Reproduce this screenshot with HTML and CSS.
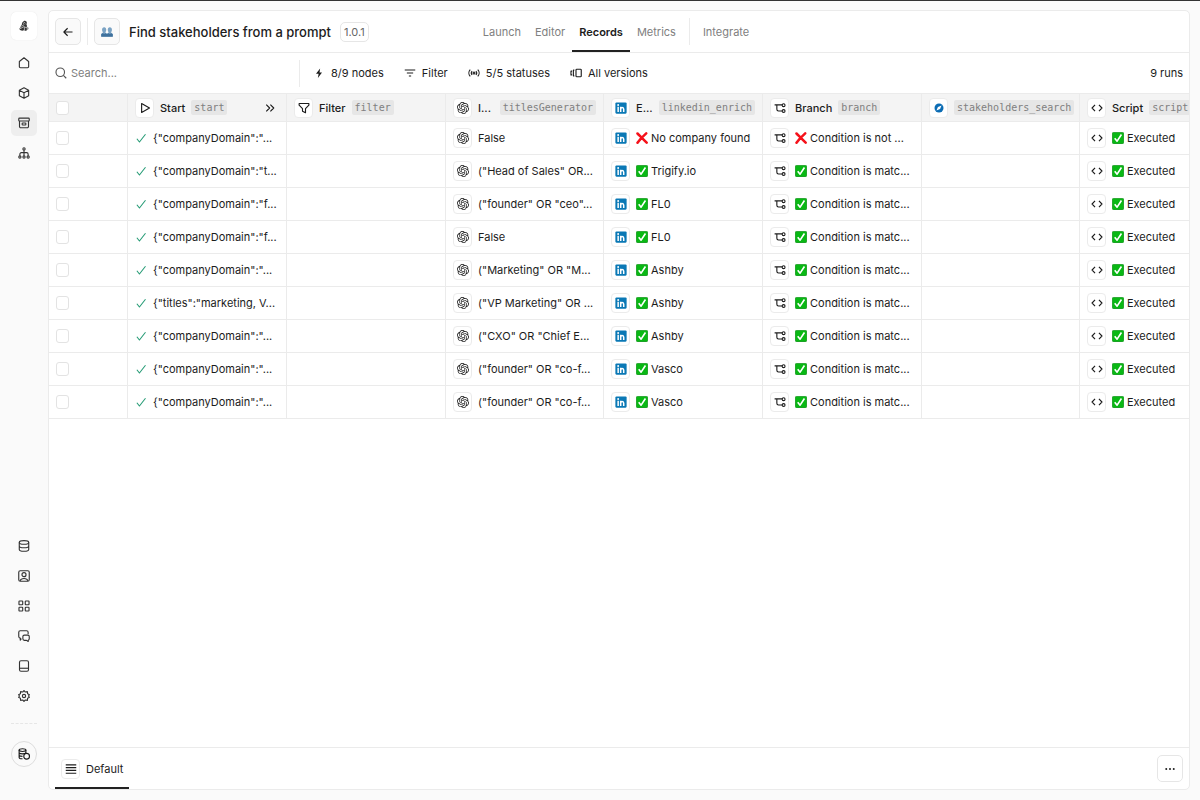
FILE: index.html
```
<!DOCTYPE html>
<html lang="en">

<head>
    <meta charset="UTF-8">
    <meta name="viewport" content="width=device-width, initial-scale=1">
    <title>Find stakeholders from a prompt</title>
    <link rel="stylesheet" href="styles.css">
</head>

<body>
    <!-- icon set -->
    <svg class="sprite" aria-hidden="true">
        <symbol id="play" viewBox="0 0 16 16"><path d="M3.500 2v12L14 8z" /></symbol>
        <symbol id="funnel" viewBox="0 0 16 16"><path d="M1.500 2h13v2.200L10 8.800v5.600l-4-2.200V8.800L1.500 4.200z" /></symbol>
        <symbol id="openai" viewBox="0 0 24 24"><path class="solid" d="M22.28 9.82a5.98 5.98 0 0 0-.52-4.91 6.05 6.05 0 0 0-6.51-2.9A6.07 6.07 0 0 0 4.98 4.18a5.98 5.98 0 0 0-4 2.9 6.05 6.05 0 0 0 .74 7.1 5.98 5.98 0 0 0 .51 4.91 6.05 6.05 0 0 0 6.51 2.9A5.98 5.98 0 0 0 13.26 24a6.06 6.06 0 0 0 5.77-4.21 5.99 5.99 0 0 0 4-2.9 6.06 6.06 0 0 0-.75-7.07zm-9.02 12.61a4.48 4.48 0 0 1-2.88-1.04l.14-.08 4.78-2.76a.79.79 0 0 0 .39-.68v-6.74l2.02 1.17a.07.07 0 0 1 .04.05v5.58a4.5 4.5 0 0 1-4.49 4.5zM3.6 18.3a4.47 4.47 0 0 1-.54-3.01l.14.09 4.78 2.76a.77.77 0 0 0 .78 0l5.84-3.37v2.33a.08.08 0 0 1-.03.06L9.74 19.95A4.5 4.5 0 0 1 3.6 18.3zM2.34 7.9a4.49 4.49 0 0 1 2.37-1.98v5.68a.77.77 0 0 0 .38.68l5.82 3.35-2.02 1.17a.08.08 0 0 1-.07 0l-4.83-2.79A4.5 4.5 0 0 1 2.34 7.9zm16.6 3.86l-5.84-3.39 2.02-1.16a.08.08 0 0 1 .07 0l4.83 2.79a4.49 4.49 0 0 1-.68 8.1v-5.68a.79.79 0 0 0-.4-.66zm2.01-3.03l-.14-.08-4.78-2.78a.78.78 0 0 0-.78 0L9.41 9.23V6.9a.07.07 0 0 1 .03-.06l4.83-2.79a4.5 4.5 0 0 1 6.68 4.68zM8.31 12.86l-2.02-1.16a.08.08 0 0 1-.04-.06V6.07a4.5 4.5 0 0 1 7.37-3.45l-.14.08L8.7 5.46a.79.79 0 0 0-.39.68zm1.1-2.36l2.6-1.5 2.6 1.5v3l-2.6 1.5-2.6-1.5z" /></symbol>
        <symbol id="linkedin" viewBox="0 0 16 16"><rect x="0.5" y="0.5" width="15" height="15" rx="1.5" fill="#0a78b5" stroke="none" /><circle cx="4.2" cy="4" r="1.3" fill="#fff" stroke="none" /><path class="mark" d="M4.2 6.4v6.8M7.6 6.4v6.8M7.6 9.6c0-1.6.9-2.2 2-2.2s2 .6 2 2.4v3.4" /></symbol>
        <symbol id="branch" viewBox="0 0 16 16"><path d="M.8 3.800h10M3.800 3.800v6a2.200 2.200 0 0 0 2.200 2.200h4.800" /><circle cx="12.8" cy="4.300" r="1.900" /><circle cx="12.800" cy="12" r="1.900" /></symbol>
        <symbol id="compass" viewBox="0 0 16 16"><circle cx="8" cy="8" r="6" fill="#0b6cb4" stroke="none" /><path d="M11.400 4.600L9.400 9.400 4.600 11.400 6.600 6.600z" fill="#fff" stroke="none" /></symbol>
        <symbol id="code" viewBox="0 0 16 16"><path d="M5.400 3.800L1.400 8l4 4.200M10.600 3.800l4 4.200-4 4.200" /></symbol>
        <symbol id="check" viewBox="0 0 16 16"><path d="M2.500 9l3.400 4.300L14 3" /></symbol>
        <symbol id="yes" viewBox="0 0 16 16"><rect x="0.5" y="0.5" width="15" height="15" rx="1.5" fill="#09b814" stroke="#078f10" stroke-width="1" /><path d="M3.600 8.200l3.200 4L12.600 3.400" fill="none" stroke="#fff" stroke-width="2.200" /></symbol>
        <symbol id="no" viewBox="0 0 16 16"><path d="M2 2c3 3 8 8.200 12.200 12.200M13.600 1.800C9.500 5.500 5 10 2 14.200" fill="none" stroke="#f5121b" stroke-width="3.400" stroke-linecap="round" /></symbol>
    </svg>

    <div class="app">
        <nav class="sidebar" aria-label="Main">
            <a class="logo" href="#" aria-label="Workspace">
                <svg viewBox="0 0 16 16"><path class="solid" d="M7.500 1.500c2-1.200 4.200-.2 4.300 2.300v9.700c-1 1.300-3 1.200-4 .3-1.500 1-4.800.6-5.600-1-.7-1.500.2-2.600 1.500-3.200-.4-1.400.2-2.400 1.400-3C4.900 4.400 5.800 2.600 7.500 1.500zM12.600 9c1.700 1 1.700 3.500 0 4.300z" /><path class="cut" d="M2.500 11.800l5.500-3M4.500 8.500l4-2.500M8.500 8.500v6M6.500 4.800l3-1.800M10 5l2.500 1M9 9.500l3.500 1" /></svg>
            </a>
            <a class="nav-item" href="#" aria-label="Home"><svg viewBox="0 0 16 16"><path d="M1.800 6L8 1l6.200 5v6.800a1.500 1.500 0 0 1-1.500 1.500H3.300a1.500 1.500 0 0 1-1.500-1.500z" /></svg></a>
            <a class="nav-item" href="#" aria-label="Apps"><svg viewBox="0 0 16 16"><path d="M8 1l6.200 3.300v7.400L8 15l-6.200-3.300V4.300zM2 4.500l6 3.200 6-3.200M8 7.700V15" /></svg></a>
            <a class="nav-item active" href="#" aria-label="Records"><svg viewBox="0 0 16 16"><rect x="1" y="1.500" width="14" height="3.800" rx="1" /><path d="M2 5.300v7.300a1.800 1.800 0 0 0 1.800 1.800h8.400a1.800 1.800 0 0 0 1.800-1.800V5.300" /><rect x="5.500" y="8" width="5" height="2.700" rx="1" /></svg></a>
            <a class="nav-item" href="#" aria-label="Workflows"><svg viewBox="0 0 16 16"><circle cx="8" cy="2.500" r="1.500" /><circle cx="2.500" cy="13.300" r="1.500" /><circle cx="8" cy="13.300" r="1.500" /><circle cx="13.500" cy="13.300" r="1.500" /><path d="M8 4v7.800M2.500 11.800V9.500a2 2 0 0 1 2-2h7a2 2 0 0 1 2 2v2.300" /></svg></a>

            <div class="spacer"></div>

            <a class="nav-item" href="#" aria-label="Data"><svg viewBox="0 0 16 16"><ellipse cx="8" cy="3.300" rx="6.300" ry="2.400" /><path d="M1.700 3.300v9.300C1.700 14 4.500 15 8 15s6.300-1 6.300-2.400V3.300M1.700 8c0 1.400 2.800 2.400 6.300 2.400s6.300-1 6.300-2.400" /></svg></a>
            <a class="nav-item" href="#" aria-label="Contacts"><svg viewBox="0 0 16 16"><rect x="1" y="1" width="14" height="14" rx="2" /><circle cx="8" cy="6.200" r="2.700" /><path d="M2.800 14.600c.7-2.400 2.600-3.200 5.200-3.200s4.500.8 5.200 3.200" /></svg></a>
            <a class="nav-item" href="#" aria-label="Integrations"><svg viewBox="0 0 16 16"><rect x="1.300" y="1.300" width="5" height="5" rx=".8" /><rect x="9.700" y="1.300" width="5" height="5" rx=".8" /><rect x="1.300" y="9.700" width="5" height="5" rx=".8" /><rect x="9.700" y="9.700" width="5" height="5" rx=".8" /></svg></a>
            <a class="nav-item" href="#" aria-label="Chat"><svg viewBox="0 0 16 16"><path d="M4.500 11.500L3 13.500v-2.700A2 2 0 0 1 1 8.800V3a2 2 0 0 1 2-2h8.500a2 2 0 0 1 2 2v2.500" /><path d="M8.500 6.800h4.500a2 2 0 0 1 2 2v2.900a2 2 0 0 1-1.400 1.900v1.700l-2.200-1.500H8.500a2 2 0 0 1-2-2v-3a2 2 0 0 1 2-2z" /></svg></a>
            <a class="nav-item" href="#" aria-label="Docs"><svg viewBox="0 0 16 16"><rect x="2" y="1" width="12" height="14" rx="2" /><path d="M2 11h12" /></svg></a>
            <a class="nav-item" href="#" aria-label="Settings"><svg viewBox="0 0 16 16"><path d="M8 .7l1.800 2 2.700-.5.300 2.800 2.400 1.300L14 8l1.200 1.700-2.400 1.300-.3 2.800-2.700-.5-1.800 2-1.800-2-2.700.5L3.200 11 .8 9.700 2 8 .8 6.300 3.200 5l.3-2.800 2.700.5z" /><circle cx="8" cy="8" r="2.200" /></svg></a>
            <hr>
            <a class="credits" href="#" aria-label="Credits"><svg viewBox="0 0 16 16"><ellipse cx="6" cy="2.800" rx="4.500" ry="1.800" /><path d="M1.500 2.800v9.700c0 1 2 1.900 4.500 1.900M10.500 2.800v4M1.500 6c0 1 2 1.800 4.500 1.800s4.500-.8 4.500-1.800M1.500 9.300c0 1 2 1.800 4.500 1.800" /><circle cx="11.500" cy="11" r="3.800" /></svg></a>
        </nav>

        <main class="panel">
            <header class="topbar">
                <div class="title">
                    <button class="square" aria-label="Back"><svg viewBox="0 0 16 16"><path d="M14 8H2.500M7.500 3L2.500 8l5 5" /></svg></button>
                    <span class="divider"></span>
                    <span class="square emoji">
                        <svg viewBox="0 0 16 16"><path fill="#7ba3c4" d="M4.200 1.500c1.800 0 2.800 1.300 2.800 3.400 0 1.600-.5 2.800-1.200 3.500 0 1.200 2 1 2.200 2.600V14H.3v-2.700c0-1.900 2.300-1.700 2.300-3.100-.7-.6-1.200-1.700-1.200-3.300 0-2.100 1-3.400 2.800-3.400zM11.800 1.500c1.800 0 2.800 1.300 2.800 3.400 0 1.600-.5 2.700-1.200 3.300 0 1.400 2.300 1.200 2.300 3.100V14H8v-3c.2-1.600 2.200-1.400 2.200-2.600C9.500 7.700 9 6.500 9 4.900c0-2.100 1-3.400 2.800-3.400z" /><path fill="#3f719d" d="M.3 14.300v-3c0-1 1-1.500 2.200-1.800l1.700 1.300L6 9.500c1.200.3 2 .8 2 1.800 0-1 .8-1.500 2-1.800l1.800 1.300 1.700-1.300c1.200.3 2.200.8 2.200 1.800v3z" /></svg>
                    </span>
                    <h1>Find stakeholders from a prompt</h1>
                    <span class="version">1.0.1</span>
                </div>
                <nav class="tabs" aria-label="Views">
                    <a href="#">Launch</a>
                    <a href="#">Editor</a>
                    <a class="active" href="#">Records</a>
                    <a href="#">Metrics</a>
                    <span class="divider"></span>
                    <a href="#">Integrate</a>
                </nav>
            </header>

            <div class="toolbar">
                <label class="search">
                    <svg viewBox="0 0 16 16"><circle cx="7" cy="7" r="5.700" /><path d="M11.200 11.200L15 15" /></svg>
                    <input type="text" placeholder="Search..." aria-label="Search">
                </label>
                <span class="divider"></span>
                <button class="tool"><svg viewBox="0 0 16 16"><path class="solid" d="M9.500 2L4 9h3.500L6.500 14.500 12 7.200H8.700z" /></svg>8/9 nodes</button>
                <button class="tool"><svg viewBox="0 0 16 16"><path d="M1 4h14M3.800 8h8.400M6.500 12h3" /></svg>Filter</button>
                <button class="tool"><svg viewBox="0 0 16 16"><circle cx="8" cy="8" r="1.300" /><path d="M5.500 5.500a3.700 3.700 0 0 0 0 5M10.500 5.500a3.700 3.700 0 0 1 0 5M3 3.500a6.500 6.500 0 0 0 0 9M13 3.500a6.500 6.500 0 0 1 0 9" /></svg>5/5 statuses</button>
                <button class="tool"><svg viewBox="0 0 16 16"><rect x="8" y="3" width="7" height="10" rx="1" /><path d="M5.800 4.200H4.500v7.600h1.300M2.800 5.500H1.300v5h1.500" /></svg>All versions</button>
                <span class="runs">9 runs</span>
            </div>

            <div class="grid">
                <table>
                    <colgroup>
                        <col class="col-select">
                        <col class="col-wide">
                        <col class="col-wide">
                        <col class="col-narrow">
                        <col class="col-wide">
                        <col class="col-wide">
                        <col class="col-narrow">
                        <col class="col-wide">
                    </colgroup>
                    <thead>
                        <tr>
                            <th><input type="checkbox" aria-label="Select all"></th>
                            <th><div class="cell"><span class="chip"><svg><use href="#play" /></svg></span><span class="name">Start</span><code>start</code><button class="expand" aria-label="Expand column"><svg viewBox="0 0 16 16"><path d="M3 3.500L7.500 8 3 12.500M8.500 3.500L13 8l-4.500 4.500" /></svg></button></div></th>
                            <th><div class="cell"><span class="chip"><svg><use href="#funnel" /></svg></span><span class="name">Filter</span><code>filter</code></div></th>
                            <th><div class="cell"><span class="chip"><svg><use href="#openai" /></svg></span><span class="name fill">I...</span><code>titlesGenerator</code></div></th>
                            <th><div class="cell"><span class="chip"><svg><use href="#linkedin" /></svg></span><span class="name fill">E...</span><code>linkedin_enrich</code></div></th>
                            <th><div class="cell"><span class="chip"><svg><use href="#branch" /></svg></span><span class="name">Branch</span><code>branch</code></div></th>
                            <th><div class="cell"><span class="chip"><svg><use href="#compass" /></svg></span><code>stakeholders_search</code></div></th>
                            <th><div class="cell"><span class="chip"><svg><use href="#code" /></svg></span><span class="name">Script</span><code>script</code></div></th>
                        </tr>
                    </thead>
                    <tbody id="rows"></tbody>
                </table>
            </div>

            <footer class="views">
                <button class="view active"><span class="chip"><svg viewBox="0 0 16 16"><path d="M1 2.500h14M1 6.200h14M1 9.900h14M1 13.600h14" /></svg></span>Default</button>
                <button class="square more" aria-label="More"><svg viewBox="0 0 16 16"><circle cx="3" cy="8" r="1.300" /><circle cx="8" cy="8" r="1.300" /><circle cx="13" cy="8" r="1.300" /></svg></button>
            </footer>
        </main>
    </div>

    <script>
        // start input, generated titles, company (null = not found)
        const runs = [
            ['{"companyDomain":"...', 'False', null],
            ['{"companyDomain":"t...', '("Head of Sales" OR...', 'Trigify.io'],
            ['{"companyDomain":"f...', '("founder" OR "ceo"...', 'FL0'],
            ['{"companyDomain":"f...', 'False', 'FL0'],
            ['{"companyDomain":"...', '("Marketing" OR "M...', 'Ashby'],
            ['{"titles":"marketing, V...', '("VP Marketing" OR ...', 'Ashby'],
            ['{"companyDomain":"...', '("CXO" OR "Chief E...', 'Ashby'],
            ['{"companyDomain":"...', '("founder" OR "co-f...', 'Vasco'],
            ['{"companyDomain":"...', '("founder" OR "co-f...', 'Vasco']
        ];

        const icon = (id, cls) => `<svg class="${cls}"><use href="#${id}" /></svg>`;
        const chip = id => `<span class="chip">${icon(id, '')}</span>`;
        const cell = html => `<td><div class="cell">${html}</div></td>`;
        const result = (ok, text) => `<span class="value">${icon(ok ? 'yes' : 'no', 'mood')}${text}</span>`;

        document.getElementById('rows').innerHTML = runs.map(([input, titles, company], i) => `
            <tr>
                <td><input type="checkbox" aria-label="Select run ${i + 1}"></td>
                ${cell(icon('check', 'ok') + `<span class="value">${input}</span>`)}
                <td></td>
                ${cell(chip('openai') + `<span class="value">${titles}</span>`)}
                ${cell(chip('linkedin') + result(company, company || 'No company found'))}
                ${cell(chip('branch') + result(company, company ? 'Condition is matc...' : 'Condition is not ...'))}
                <td></td>
                ${cell(chip('code') + result(true, 'Executed'))}
            </tr>`).join('');
    </script>
</body>

</html>
```
FILE: styles.css
```
* {
    box-sizing: border-box;
}

body {
    margin: 0;
    background-color: #fafafa;
    color: #1c1c1c;
    font-family: Inter, "Liberation Sans", sans-serif;
    font-size: 11px;
    line-height: 16px;
}

a {
    color: inherit;
    text-decoration: none;
}

button,
input {
    margin: 0;
    font: inherit;
    color: inherit;
}

button {
    padding: 0;
    border: 0;
    background: none;
}

svg {
    display: block;
    flex: none;
    width: 12px;
    height: 12px;
    fill: none;
    stroke: currentColor;
    stroke-width: 1.5;
    stroke-linejoin: round;
}

.sprite {
    position: absolute;
    width: 0;
    height: 0;
}

.solid {
    fill: currentColor;
    stroke: none;
}

.mark {
    stroke: #fff;
    stroke-width: 2;
}

.cut {
    stroke: #fff;
    stroke-width: 0.8;
}

.app {
    display: flex;
    height: 100vh;
    padding: 9px 10px 10px 0;
    border-top: 1px solid #333;
}

/* sidebar */
.sidebar {
    display: flex;
    flex: none;
    flex-direction: column;
    align-items: center;
    gap: 4px;
    width: 48px;
    padding: 2px 0 23px;
}

.logo,
.nav-item {
    display: flex;
    align-items: center;
    justify-content: center;
    width: 26px;
    height: 26px;
    border-radius: 5px;
    color: #333;
}

.logo {
    height: 28px;
    margin-bottom: 6px;
    background-color: #fff;
    box-shadow: 0 0 1px #ddd;
}

.nav-item.active {
    background-color: #eee;
}

.spacer {
    flex: 1;
}

.sidebar hr {
    width: 26px;
    margin: 10px 0 13px;
    border: 0;
    border-top: 1px dashed #e6e6e6;
}

.credits {
    display: flex;
    align-items: center;
    justify-content: center;
    width: 26px;
    height: 26px;
    border: 1px solid #ddd;
    border-radius: 50%;
}

/* main panel */
.panel {
    display: flex;
    flex: 1;
    flex-direction: column;
    min-width: 0;
    border: 1px solid #ebebeb;
    border-radius: 5px;
    background-color: #fff;
    overflow: hidden;
}

.divider {
    width: 1px;
    height: 27px;
    background-color: #ebebeb;
}

.topbar {
    display: grid;
    grid-template-columns: 1fr auto 1fr;
    flex: none;
    height: 42px;
    padding: 0 12px 0 6px;
    border-bottom: 1px solid #ebebeb;
}

.title {
    display: flex;
    align-items: center;
    gap: 6px;
    white-space: nowrap;
}

.square {
    display: flex;
    flex: none;
    align-items: center;
    justify-content: center;
    width: 26px;
    height: 27px;
    border: 1px solid #e6e6e6;
    border-radius: 5px;
}

.topbar .square {
    background-color: #fafafa;
}

.emoji svg {
    stroke: none;
}

h1 {
    margin: 0 3px;
    font-size: 13px;
    font-weight: 500;
    line-height: 20px;
}

.version {
    padding: 1px 3px;
    border: 1px solid #e6e6e6;
    border-radius: 5px;
    color: #666;
}

.tabs {
    display: flex;
    align-items: center;
    color: #808080;
}

.tabs a {
    padding: 11px 7px 10px;
    border-top: 2px solid transparent;
    border-bottom: 2px solid transparent;
}

.tabs a.active {
    border-bottom-color: #222;
    color: #1c1c1c;
    font-weight: 600;
}

.tabs .divider {
    margin: 0 6px;
}

.toolbar {
    display: flex;
    flex: none;
    align-items: center;
    height: 41px;
    padding: 0 6px;
    border-bottom: 1px solid #ebebeb;
}

.search {
    display: flex;
    align-items: center;
    gap: 4px;
    width: 244px;
    color: #555;
}

.search input {
    flex: 1;
    min-width: 0;
    padding: 0;
    border: 0;
    outline: 0;
}

.search input::placeholder {
    color: #808080;
}

.tool {
    display: flex;
    align-items: center;
    gap: 6px;
    margin-right: 20px;
}

.toolbar .divider {
    margin-right: 13px;
}

.runs {
    margin-left: auto;
}

/* records */
.grid {
    flex: 1;
    min-height: 0;
    overflow: hidden;
}

table {
    width: 1190px;
    border-collapse: separate;
    border-spacing: 0;
    table-layout: fixed;
}

.col-select {
    width: 79px;
}

.col-wide {
    width: 159px;
}

.col-narrow {
    width: 158px;
}

th,
td {
    height: 33px;
    padding: 0 7px;
    border-right: 1px solid #ebebeb;
    border-bottom: 1px solid #ebebeb;
    font-weight: 400;
    text-align: left;
    white-space: nowrap;
    overflow: hidden;
}

th {
    height: 28px;
    background-color: #f4f4f4;
}

.cell {
    display: flex;
    align-items: center;
    gap: 6px;
}

.chip {
    display: flex;
    flex: none;
    align-items: center;
    justify-content: center;
    width: 19px;
    height: 20px;
    border: 1px solid #ebebeb;
    border-radius: 4px;
    background-color: #fff;
}

.name {
    font-weight: 500;
}

.name.fill {
    flex: 1;
}

code {
    padding: 0 3px;
    border-radius: 2px;
    background-color: #e6e6e6;
    color: #808080;
    font-family: "DejaVu Sans Mono", monospace;
    font-size: 10px;
    line-height: 15px;
}

.expand {
    margin: 0 3px 0 auto;
}

.value {
    display: flex;
    align-items: center;
    gap: 3px;
}

.ok {
    color: #2a9d78;
}

input[type="checkbox"] {
    display: block;
    width: 13px;
    height: 14px;
    appearance: none;
    border: 1px solid #e3e3e3;
    border-radius: 3px;
    background-color: #fff;
}

/* saved views */
.views {
    display: flex;
    flex: none;
    align-items: center;
    justify-content: space-between;
    height: 42px;
    padding: 0 6px;
    border-top: 1px solid #ebebeb;
}

.view {
    display: flex;
    align-items: center;
    gap: 6px;
    height: 41px;
    padding: 2px 6px 0;
    border-bottom: 2px solid transparent;
}

.view.active {
    border-bottom-color: #222;
}

.more svg {
    fill: currentColor;
    stroke: none;
}
```
